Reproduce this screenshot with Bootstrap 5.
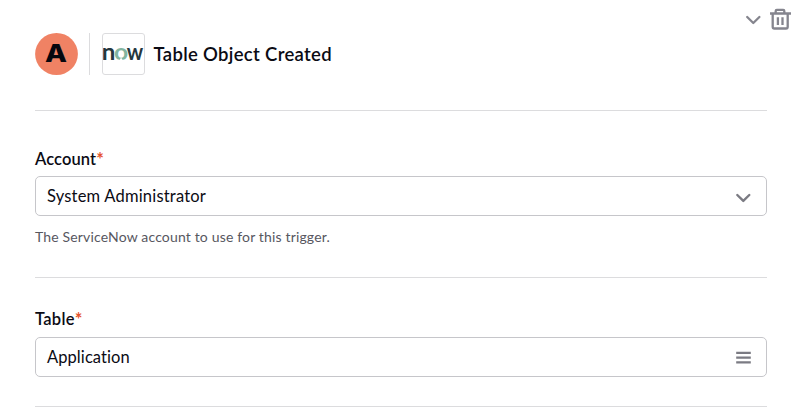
<!DOCTYPE html>
<html lang="en">
<head>
<meta charset="utf-8">
<meta name="viewport" content="width=device-width, initial-scale=1">
<title>Table Object Created</title>
<link href="https://cdn.jsdelivr.net/npm/bootstrap@5.3.0/dist/css/bootstrap.min.css" rel="stylesheet">
<style>
body{font-family:Lato,"Open Sans",sans-serif;font-variant-ligatures:none;color:#0b0b14;height:416px;overflow:hidden;background:#fff}
.page{padding:0 9px 0 35px}
.sheet{width:732px}
.tools{height:33px;padding-top:8px;gap:7px}
.tools svg,.field svg{display:block;flex:none}
.head{height:42px;margin-bottom:35px}
.split{width:1px;height:42px;background:#dcdcde;margin:0 12px 0 11px}
.brand{width:43px;height:42px;border:1px solid #dcdcde;border-radius:3px}
.heading{font-size:18.5px;font-weight:600;line-height:24px;margin:0 0 0 8.5px;letter-spacing:.32px}
.rule{height:1px;background:#dcdcde}
.account{padding:37px 0 30px}
.table-name{padding:30px 0 29px}
.lbl{font-size:16.5px;font-weight:600;line-height:22px;display:block;margin-bottom:6px;letter-spacing:.1px}
.table-name .lbl{margin-bottom:7px;letter-spacing:.3px}
.req{color:#e5532d;font-size:18px;line-height:1;font-weight:700;letter-spacing:0;position:relative;top:1px}
.field{height:40px;border:1px solid #c6c6ca;border-radius:5px;font-size:16.5px;letter-spacing:.2px;padding:0 15px 0 11px}
.table-name .field{letter-spacing:.08px}
.hint{font-size:14px;line-height:20px;letter-spacing:.16px;color:#57575f;margin-top:11px}
</style>
</head>
<body>
<main class="page">
  <div class="tools d-flex justify-content-end">
    <svg width="17" height="24" viewBox="0 0 17 24" fill="none" stroke="#85858e" stroke-width="2.3" stroke-linecap="round" stroke-linejoin="round"><path d="M2.2 9 8.3 15 14.4 9"/></svg>
    <svg width="22" height="24" viewBox="0 0 22 24" fill="none" stroke="#85858e" stroke-width="2.3"><path d="M1 5.5H22M6.7 5V3Q6.7 1.9 7.8 1.9H14.2Q15.3 1.9 15.3 3V5M3.7 6V18.8Q3.7 20.5 5.4 20.5H17Q18.7 20.5 18.7 18.8V6M8.9 9.3V17M13.5 9.3V17"/></svg>
  </div>
  <div class="sheet">
    <header class="head d-flex align-items-center">
      <svg width="43" height="42" viewBox="0 0 43 42"><ellipse cx="21.5" cy="21" rx="21.4" ry="21" fill="#f08264"/><text x="21" y="29" text-anchor="middle" font-family="Inter,sans-serif" font-weight="800" font-size="25" textLength="22" lengthAdjust="spacingAndGlyphs" fill="#07070e">A</text></svg>
      <div class="split"></div>
      <div class="brand"><svg class="d-block" width="41" height="40" viewBox="0 0 41 40" font-family="Lato,sans-serif" font-weight="700" font-size="22"><text x="-1.2" y="26.4" fill="#25373d" textLength="13.6" lengthAdjust="spacingAndGlyphs">n</text><text x="11" y="26.4" fill="#82b5a0" textLength="14.2" lengthAdjust="spacingAndGlyphs">o</text><path d="M15.4 28 18.1 23.4 20.8 28Z" fill="#fff"/><text x="23.8" y="26.4" fill="#25373d" textLength="16.4" lengthAdjust="spacingAndGlyphs">w</text></svg></div>
      <h1 class="heading">Table Object Created</h1>
    </header>
    <div class="rule"></div>
    <section class="account">
      <label class="lbl">Account<span class="req">*</span></label>
      <div class="field d-flex align-items-center justify-content-between"><span>System Administrator</span>
        <svg width="16" height="16" viewBox="0 0 16 16" fill="none" stroke="#7b7b83" stroke-width="2.4" stroke-linecap="round" stroke-linejoin="round"><path d="M2.3 7 8.3 12.9 14.3 7"/></svg></div>
      <div class="hint">The ServiceNow account to use for this trigger.</div>
    </section>
    <div class="rule"></div>
    <section class="table-name">
      <label class="lbl">Table<span class="req">*</span></label>
      <div class="field d-flex align-items-center justify-content-between"><span>Application</span>
        <svg width="16" height="16" viewBox="0 0 16 16" stroke="#7b7b83" stroke-width="2.3"><path d="M1.2 3.9H15.8M1.2 8.6H15.8M1.2 13.3H15.8"/></svg></div>
    </section>
    <div class="rule"></div>
  </div>
</main>
<script src="https://cdn.jsdelivr.net/npm/bootstrap@5.3.0/dist/js/bootstrap.bundle.min.js"></script>
</body>
</html>
